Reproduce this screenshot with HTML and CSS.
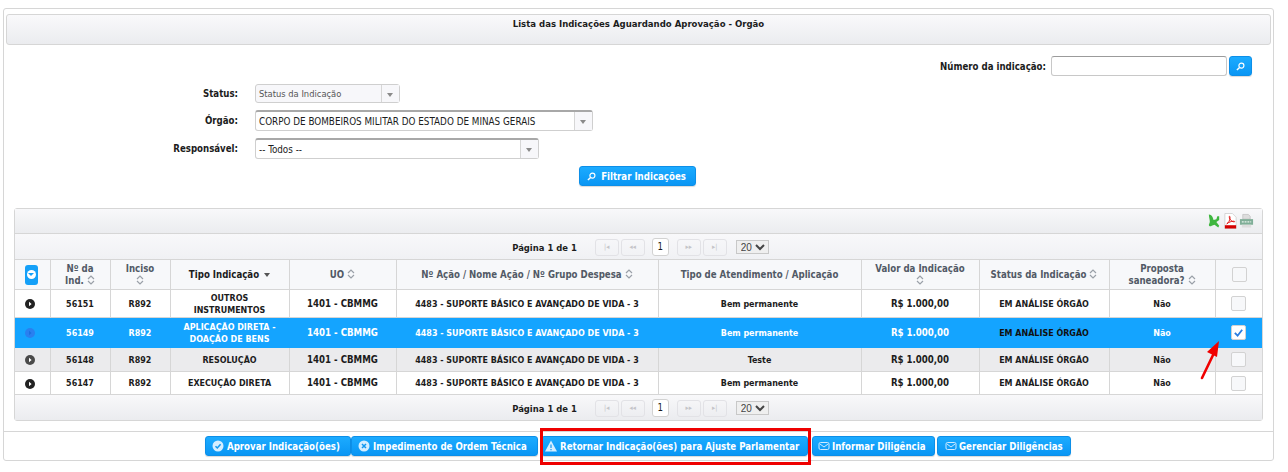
FILE: index.html
```html
<!DOCTYPE html>
<html>
  <head>
    <title>Lista das Indicações</title>
    <link rel="stylesheet" href="styles.css">
  </head>
  <body>
    <svg class="defs" width="0" height="0">
      <symbol id="sort" viewBox="0 0 8 10">
        <path d="M1 4 4 1l3 3M1 6l3 3 3-3" fill="none" stroke="#9aa0a8" stroke-width="1.2"/>
      </symbol>
      <symbol id="lens" viewBox="0 0 10 10">
        <circle cx="6" cy="4" r="2.8" fill="none" stroke="#fff" stroke-width="1.3"/>
        <path d="M4 6 1 9" stroke="#fff" stroke-width="1.6"/>
      </symbol>
      <symbol id="play" viewBox="0 0 10 10">
        <circle cx="5" cy="5" r="5"/>
        <path d="M4 2.8 6.6 5 4 7.2z" fill="currentColor"/>
      </symbol>
      <symbol id="mail" viewBox="0 0 12 10">
        <rect x="1" y="1.5" width="10" height="7" rx="1.5" fill="none" stroke="#cfeaff" stroke-width="1"/>
        <path d="M2 3l4 3 4-3" fill="none" stroke="#cfeaff" stroke-width="1"/>
      </symbol>
    </svg>

    <div class="panel">
      <div class="panel-title">Lista das Indicações Aguardando Aprovação - Orgão</div>

      <div class="search-line">
        <label class="label">Número da indicação:</label>
        <input type="text" class="text-input" />
        <button class="btn btn-icon"><svg class="ico-lens"><use href="#lens"/></svg></button>
      </div>

      <div class="filters">
        <div class="filter-row row-status">
          <label class="label filter-label">Status:</label>
          <div class="combo combo-status"><span class="combo-text">Status da Indicação</span><span class="combo-arrow"></span></div>
        </div>
        <div class="filter-row row-orgao">
          <label class="label filter-label">Órgão:</label>
          <div class="combo combo-orgao"><span class="combo-text">CORPO DE BOMBEIROS MILITAR DO ESTADO DE MINAS GERAIS</span><span class="combo-arrow"></span></div>
        </div>
        <div class="filter-row row-resp">
          <label class="label filter-label">Responsável:</label>
          <div class="combo combo-resp"><span class="combo-text">-- Todos --</span><span class="combo-arrow"></span></div>
        </div>
      </div>

      <div class="filter-action">
        <button class="btn btn-filter"><svg class="ico-lens"><use href="#lens"/></svg>Filtrar Indicações</button>
      </div>

      <div class="grid">
        <div class="grid-tools">
          <svg class="tool" viewBox="0 0 16 16">
            <path d="M2 1c2 0 3 1 4 3l1 3 3-1 1-3 2 0 0 4-3 2 3 4-1 2-4-3-3 1c-1 1-3 1-3-1l1-3c0-3-1-5-1-8z" fill="#3fb63f"/>
          </svg>
          <svg class="tool" viewBox="0 0 16 16">
            <path d="M2 0h8l4 4v12H2z" fill="#fff" stroke="#bbb" stroke-width=".6"/>
            <rect x="2" y="12.5" width="12" height="3.5" fill="#d40000"/>
            <path d="M4 11c2-1 3.500-4 3.500-7 0-1.500-1 -1.500-.8 0 .4 2.500 2.300 4.500 5 5 1.200.2 1-1-.5-.8-2.500.2-5 1-7.200 2.800z" fill="none" stroke="#e01010" stroke-width="1"/>
          </svg>
          <svg class="tool" viewBox="0 0 16 16">
            <path d="M4 1h6l2 2v3H4z" fill="#ddd" stroke="#aaa" stroke-width=".5"/>
            <rect x="1" y="6" width="14" height="6" fill="#7fae97"/>
            <path d="M3 9h10" stroke="#e8f2ec" stroke-width="1.4" stroke-dasharray="2 1"/>
            <rect x="3" y="12" width="10" height="3" fill="#ddd"/>
          </svg>
        </div>
        <div class="pager">
          <span class="pager-text">Página 1 de 1</span>
          <span class="pager-btns">
            <span class="pg-btn">|◂</span><span class="pg-btn">◂◂</span>
          </span>
          <span class="pg-current">1</span>
          <span class="pager-btns">
            <span class="pg-btn">▸▸</span><span class="pg-btn">▸|</span>
          </span>
          <select class="pg-size"><option>20</option></select>
        </div>

        <table class="list">
          <colgroup>
            <col class="c1"><col class="c2"><col class="c3"><col class="c4"><col class="c5">
            <col class="c6"><col class="c7"><col class="c8"><col class="c9"><col class="c10"><col class="c11">
          </colgroup>
          <thead>
            <tr>
              <th><span class="toggle-all"><span class="toggle-dot"></span></span></th>
              <th>Nº da<br>Ind. <svg class="sort"><use href="#sort"/></svg></th>
              <th>Inciso<br><svg class="sort"><use href="#sort"/></svg></th>
              <th class="sorted">Tipo Indicação <span class="caret"></span></th>
              <th>UO <svg class="sort"><use href="#sort"/></svg></th>
              <th>Nº Ação / Nome Ação / Nº Grupo Despesa <svg class="sort"><use href="#sort"/></svg></th>
              <th>Tipo de Atendimento / Aplicação</th>
              <th>Valor da Indicação<br><svg class="sort"><use href="#sort"/></svg></th>
              <th>Status da Indicação <svg class="sort"><use href="#sort"/></svg></th>
              <th>Proposta<br>saneadora? <svg class="sort"><use href="#sort"/></svg></th>
              <th><span class="check check-all"></span></th>
            </tr>
          </thead>
          <tbody>
            <tr class="r1">
              <td><svg class="play"><use href="#play"/></svg></td>
              <td>56151</td><td>R892</td><td>OUTROS<br>INSTRUMENTOS</td><td class="wide">1401 - CBMMG</td>
              <td>4483 - SUPORTE BÁSICO E AVANÇADO DE VIDA - 3</td><td>Bem permanente</td>
              <td class="wide">R$ 1.000,00</td><td>EM ANÁLISE ÓRGÃO</td><td>Não</td>
              <td><span class="check"></span></td>
            </tr>
            <tr class="r2 selected">
              <td><svg class="play play-sel"><use href="#play"/></svg></td>
              <td>56149</td><td>R892</td><td>APLICAÇÃO DIRETA -<br>DOAÇÃO DE BENS</td><td class="wide">1401 - CBMMG</td>
              <td>4483 - SUPORTE BÁSICO E AVANÇADO DE VIDA - 3</td><td>Bem permanente</td>
              <td class="wide">R$ 1.000,00</td><td class="dark">EM ANÁLISE ÓRGÃO</td><td>Não</td>
              <td><span class="check checked"><svg viewBox="0 0 12 12"><path d="M2 6.5 5 9.500 10 3" fill="none" stroke="#2b7de0" stroke-width="2"/></svg></span></td>
            </tr>
            <tr class="r3 alt">
              <td><svg class="play play-alt"><use href="#play"/></svg></td>
              <td>56148</td><td>R892</td><td>RESOLUÇÃO</td><td class="wide">1401 - CBMMG</td>
              <td>4483 - SUPORTE BÁSICO E AVANÇADO DE VIDA - 3</td><td>Teste</td>
              <td class="wide">R$ 1.000,00</td><td>EM ANÁLISE ÓRGÃO</td><td>Não</td>
              <td><span class="check"></span></td>
            </tr>
            <tr class="r4">
              <td><svg class="play"><use href="#play"/></svg></td>
              <td>56147</td><td>R892</td><td>EXECUÇÃO DIRETA</td><td class="wide">1401 - CBMMG</td>
              <td>4483 - SUPORTE BÁSICO E AVANÇADO DE VIDA - 3</td><td>Bem permanente</td>
              <td class="wide">R$ 1.000,00</td><td>EM ANÁLISE ÓRGÃO</td><td>Não</td>
              <td><span class="check"></span></td>
            </tr>
          </tbody>
        </table>

        <div class="pager pager-bottom">
          <span class="pager-text">Página 1 de 1</span>
          <span class="pager-btns">
            <span class="pg-btn">|◂</span><span class="pg-btn">◂◂</span>
          </span>
          <span class="pg-current">1</span>
          <span class="pager-btns">
            <span class="pg-btn">▸▸</span><span class="pg-btn">▸|</span>
          </span>
          <select class="pg-size"><option>20</option></select>
        </div>
      </div>

      <div class="actions">
        <button class="btn btn-action btn-approve">
          <svg class="ico" viewBox="0 0 12 12"><circle cx="6" cy="6" r="5.5" fill="#d5eeff"/><path d="M3.5 6.2 5.3 8 8.6 4.2" fill="none" stroke="#1298f0" stroke-width="1.5"/></svg>Aprovar Indicação(ões)
        </button>
        <button class="btn btn-action btn-block">
          <svg class="ico" viewBox="0 0 12 12"><circle cx="6" cy="6" r="5.5" fill="#d5eeff"/><path d="M4 4l4 4M8 4l-4 4" stroke="#1298f0" stroke-width="1.5"/></svg>Impedimento de Ordem Técnica
        </button>
        <button class="btn btn-action btn-return">
          <svg class="ico" viewBox="0 0 12 12"><path d="M6 .5 12 11.5H0z" fill="#d5eeff"/><path d="M6 4.5v3.5M6 9v1.2" stroke="#1298f0" stroke-width="1.2"/></svg>Retornar Indicação(ões) para Ajuste Parlamentar
        </button>
        <button class="btn btn-action btn-inform">
          <svg class="ico"><use href="#mail"/></svg>Informar Diligência
        </button>
        <button class="btn btn-action btn-manage">
          <svg class="ico"><use href="#mail"/></svg>Gerenciar Diligências
        </button>
      </div>
    </div>

    <div class="red-box"></div>
    <svg class="red-arrow" viewBox="0 0 24 40">
      <path d="M3 38 15 13" stroke="#f00000" stroke-width="2.6" stroke-linecap="round"/>
      <path d="M20 1 8 12l10 5z" fill="#f00000"/>
    </svg>
  </body>
</html>
```

FILE: styles.css
```css
* {
  box-sizing: border-box;
}
body {
  margin: 0;
  font-family: "DejaVu Sans", sans-serif;
  font-stretch: condensed;
  font-size: 9.6px;
  color: #1c1c1c;
  background: #fff;
}
.defs {
  position: absolute;
}
.panel {
  margin: 8px 14px 0 3px;
  height: 453px;
  border: 1px solid #d6d6d6;
  border-radius: 3px;
  padding: 5px 2px 0 2px;
}
.panel-title {
  height: 31px;
  padding-top: 3px;
  text-align: center;
  font-weight: 700;
  font-size: 9.5px;
  border: 1px solid #d6d6d6;
  border-radius: 3px;
  background: linear-gradient(#f9f9fb, #ebecef);
}
.label {
  font-weight: 700;
  font-size: 9.6px;
}
.search-line {
  display: flex;
  align-items: center;
  justify-content: flex-end;
  height: 20px;
  margin-top: 11px;
  padding-right: 19px;
}
.text-input {
  width: 176px;
  height: 20px;
  margin: 0 2px 0 5px;
  border: 1px solid #c8c8c8;
  border-top-color: #9b9b9b;
  border-radius: 3px;
}
.btn {
  border: 1px solid #0d8fe8;
  border-radius: 3px;
  background: linear-gradient(#1cabff, #0a96f4);
  color: #fff;
  font-family: inherit;
  font-stretch: inherit;
  font-weight: 700;
  font-size: 9.6px;
  padding: 0;
  display: inline-flex;
  align-items: center;
  justify-content: center;
  box-shadow: 0 1px 1px rgba(0, 0, 0, 0.15);
}
.btn-icon {
  width: 23px;
  height: 20px;
}
.ico-lens {
  width: 9px;
  height: 9px;
}
.filters {
  margin-top: 8px;
}
.filter-row {
  display: flex;
  align-items: center;
}
.row-status {
  height: 19px;
}
.row-orgao {
  height: 21px;
  margin-top: 7px;
}
.row-resp {
  height: 21px;
  margin-top: 7px;
}
.filter-label {
  width: 232px;
  text-align: right;
}
.combo {
  display: flex;
  height: 100%;
  margin-left: 17px;
  border: 1px solid #cfcfcf;
  border-radius: 3px;
  font-size: 9.8px;
  line-height: 19px;
  background: #fff;
}
.combo-orgao,
.combo-resp {
  border-top: 2px solid #a8a8a8;
}
.combo-status {
  width: 145px;
  background: #f7f7fa;
  color: #555;
  font-size: 9.3px;
  line-height: 18px;
}
.combo-orgao {
  width: 338px;
}
.combo-resp {
  width: 284px;
}
.combo-text {
  flex: 1;
  padding-left: 3px;
  white-space: nowrap;
}
.combo-arrow {
  width: 18px;
  border-left: 1px solid #d6d6d6;
  background: #f7f7fa;
  position: relative;
}
.combo-arrow::after {
  content: "";
  position: absolute;
  left: 5px;
  top: 8px;
  border: 3.5px solid transparent;
  border-top: 4px solid #8a8a8a;
}
.filter-action {
  display: flex;
  justify-content: center;
  margin-top: 7px;
}
.btn-filter {
  width: 117px;
  height: 20px;
  margin-left: -2px;
  padding-right: 2px;
  gap: 5px;
}
.grid {
  margin: 22px 0 0 8px;
  border: 1px solid #d6d6d6;
  border-radius: 3px;
  width: 1249px;
}
.grid-tools {
  height: 25px;
  background: linear-gradient(#f8f8fa, #ebecef);
  border-bottom: 1px solid #d6d6d6;
  display: flex;
  justify-content: flex-end;
  align-items: center;
  gap: 1px;
  padding-right: 8px;
}
.tool {
  width: 15px;
  height: 16px;
}
.pager {
  height: 25px;
  background: linear-gradient(#f8f8fa, #f0f1f4);
  display: flex;
  align-items: center;
  justify-content: center;
  padding: 1px 0 0 4px;
}
.pager-bottom {
  background: linear-gradient(#f8f8fa, #ebecef);
}
.pager-text {
  font-weight: 700;
  font-size: 9.4px;
  margin-right: 18px;
}
.pager-btns {
  display: flex;
  gap: 2px;
}
.pg-btn {
  width: 24px;
  height: 17px;
  border: 1px solid #e2e2e6;
  border-radius: 3px;
  color: #c4c4c8;
  font-size: 7px;
  line-height: 15px;
  text-align: center;
}
.pg-current {
  width: 17px;
  height: 18px;
  margin: 0 8px 0 7px;
  background: #fff;
  border: 1px solid #d2d2d2;
  border-radius: 3px;
  font-size: 9.6px;
  line-height: 16px;
  text-align: center;
}
.pg-size {
  width: 33px;
  height: 14px;
  margin-left: 9px;
  font-size: 10px;
  color: #444;
  border: 1px solid #c8c8c8;
  padding: 0;
}
.list {
  width: 1247px;
  table-layout: fixed;
  border-collapse: collapse;
  font-weight: 700;
  text-align: center;
  font-size: 8.9px;
}
.list th,
.list td {
  border: 1px solid #d6d6d6;
  padding: 0;
  line-height: 12px;
}
.list tr > :first-child {
  border-left: 0;
}
.list tr > :last-child {
  border-right: 0;
}
.list tbody tr:last-child td {
  border-bottom: 1px solid #d6d6d6;
}
.list th {
  height: 30px;
  background: #f7f8fa;
  color: #525a66;
  font-size: 9.6px;
  font-weight: 700;
}
.list th.sorted {
  color: #1c1c1c;
}
.list td.wide {
  font-size: 9.6px;
}
.c1 { width: 35px; }
.c2 { width: 60px; }
.c3 { width: 60px; }
.c4 { width: 119px; }
.c5 { width: 107px; }
.c6 { width: 262px; }
.c7 { width: 203px; }
.c8 { width: 118px; }
.c9 { width: 130px; }
.c10 { width: 106px; }
.c11 { width: 47px; }
.r1 td { height: 28px; }
.r2 td { height: 30px; }
.r3 td { height: 24px; }
.r4 td { height: 23px; }
.alt td {
  background: #ebebed;
}
.selected td {
  background: #14a4ff;
  color: #fff;
  border-color: #14a4ff;
}
.selected td.dark {
  color: #111;
}
.sort {
  width: 8px;
  height: 10px;
  vertical-align: -1px;
}
.caret {
  display: inline-block;
  margin-left: 2px;
  border: 3.5px solid transparent;
  border-top: 4px solid #555;
  border-bottom: 0;
  vertical-align: 1px;
}
.toggle-all {
  display: inline-block;
  width: 13px;
  height: 20px;
  margin-right: 1px;
  border-radius: 3px;
  background: #14a0f8;
  vertical-align: middle;
  position: relative;
}
.toggle-dot {
  position: absolute;
  left: 2px;
  top: 5px;
  width: 9px;
  height: 9px;
  border-radius: 50%;
  background: #fff;
}
.toggle-dot::after {
  content: "";
  position: absolute;
  left: 1px;
  top: 3px;
  border: 3.5px solid transparent;
  border-top: 3px solid #14a0f8;
}
.play {
  width: 10px;
  height: 10px;
  fill: #222;
  color: #fff;
  vertical-align: middle;
  margin-right: 5px;
}
.selected .play-sel {
  fill: #2a80f0;
  color: #1a70e0;
}
.play-alt {
  fill: #4a4a4a;
}
.check {
  display: inline-block;
  width: 15px;
  height: 15px;
  border: 1px solid #d2d2d2;
  border-radius: 2px;
  background: #f7f8fa;
  vertical-align: middle;
}
.check-all {
  margin-left: 2px;
}
.checked {
  background: #fff;
  padding: 1px;
}
.checked svg {
  display: block;
}
.actions {
  margin: 10px -2px 0;
  border-top: 1px solid #d6d6d6;
  padding-top: 4px;
  display: flex;
  padding-left: 201px;
}
.btn-action {
  height: 20px;
  gap: 3px;
  white-space: nowrap;
  justify-content: flex-start;
  padding-left: 6px;
}
.ico {
  width: 12px;
  height: 12px;
}
.btn-approve {
  width: 146px;
}
.btn-block {
  width: 187px;
}
.btn-return {
  width: 267px;
  margin-left: 3px;
  padding-left: 3px;
}
.btn-inform {
  width: 123px;
  margin-left: 4px;
  padding-left: 5px;
  gap: 2px;
}
.btn-manage {
  width: 134px;
  margin-left: 2px;
  padding-left: 7px;
  gap: 2px;
}
.red-box {
  position: absolute;
  left: 540px;
  top: 428px;
  width: 271px;
  height: 37px;
  border: 3px solid #ee0000;
}
.red-arrow {
  position: absolute;
  left: 1199px;
  top: 340px;
  width: 24px;
  height: 40px;
}
```
